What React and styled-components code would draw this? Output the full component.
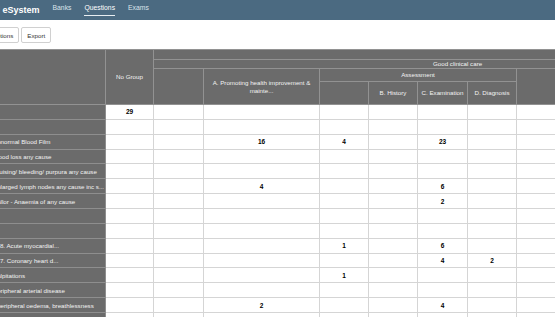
import React from 'react'
import styled, { createGlobalStyle } from 'styled-components'

const GlobalStyle = createGlobalStyle`
  html, body {
    margin: 0;
    padding: 0;
    overflow: hidden;
    background: #fff;
  }
  body {
    font-family: "Liberation Sans", Arial, sans-serif;
  }
`

/* page is scrolled sideways a little, like the screenshot */
const Page = styled.div`
  margin-left: -32px;
`

const NavBar = styled.nav`
  display: flex;
  align-items: center;
  gap: 13px;
  height: 20px;
  background: #4b6a81;
`
const Brand = styled.span`
  font-size: 9px;
  font-weight: bold;
  color: #fff;
  white-space: nowrap;
`
const NavLinks = styled.div`
  display: flex;
  align-items: center;
  gap: 13px;
`
const NavLink = styled.a`
  display: inline-block;
  font-size: 6.8px;
  line-height: 8px;
  padding-bottom: 2.5px;
  color: ${p => (p.$active ? '#ffffff' : '#dbe4eb')};
  border-bottom: 1px solid ${p => (p.$active ? '#e8eef2' : 'transparent')};
  text-decoration: none;
  cursor: pointer;
`

const Content = styled.div`
  padding: 0 18px;
`
const Toolbar = styled.div`
  display: flex;
  gap: 2px;
  padding: 7px 0 6px;
`
const ToolButton = styled.button`
  height: 16px;
  box-sizing: border-box;
  padding: 0 5px;
  border: 1px solid #d0d0d0;
  border-radius: 2px;
  background: #fff;
  color: #333;
  font-family: inherit;
  font-size: 6.2px;
`

const Table = styled.table`
  border-collapse: collapse;
  table-layout: fixed;
  width: 774px;
`
const Col = styled.col`
  width: ${p => p.$w}px;
`
const HeadRow = styled.tr`
  height: ${p => p.$h}px;
`
const Th = styled.th`
  background: #6b6b6b;
  color: #f3f3f3;
  font-weight: normal;
  font-size: 6.2px;
  line-height: 1.2;
  border: 1px solid #929292;
  padding: 0 3px;
  text-align: center;
  vertical-align: middle;
  white-space: ${p => (p.$wrap ? 'normal' : 'nowrap')};
`
const BodyRow = styled.tr`
  height: 14.86px;
`
const Label = styled.td`
  background: #6b6b6b;
  color: #f4f4f4;
  font-size: 6.2px;
  border: 1px solid #8e8e8e;
  padding: 0 0 0 6px;
  white-space: nowrap;
  overflow: hidden;
`
const Cell = styled.td`
  border: 1px solid #d5d5d5;
  padding: 0;
  text-align: center;
  font-size: 6.5px;
  font-weight: bold;
  color: #000;
`

const widths = [119, 48, 50, 116, 49, 49, 50, 49, 49, 49, 49, 49, 49]

const rows = [
  { label: '', values: { 1: 29 } },
  { label: '', values: {} },
  { label: 'Abnormal Blood Film', values: { 3: 16, 4: 4, 6: 23 } },
  { label: 'Blood loss any cause', values: {} },
  { label: 'Bruising/ bleeding/ purpura any cause', values: {} },
  { label: 'Enlarged lymph nodes any cause inc s...', values: { 3: 4, 6: 6 } },
  { label: 'Pallor - Anaemia of any cause', values: { 6: 2 } },
  { label: '', values: {} },
  { label: '', values: {} },
  { label: '128. Acute myocardial...', values: { 4: 1, 6: 6 } },
  { label: '127. Coronary heart d...', values: { 6: 4, 7: 2 } },
  { label: 'Palpitations', values: { 4: 1 } },
  { label: 'Peripheral arterial disease', values: {} },
  { label: 'Pperipheral oedema, breathlessness', values: { 3: 2, 6: 4 } },
  { label: '', values: {} },
]

function QuestionGrid() {
  return (
    <Table>
      <colgroup>
        {widths.map((w, i) => <Col key={i} $w={w} />)}
      </colgroup>
      <thead>
        <HeadRow $h={10}>
          <Th rowSpan={4}></Th>
          <Th rowSpan={4}>No Group</Th>
          <Th colSpan={11}></Th>
        </HeadRow>
        <HeadRow $h={9}>
          <Th colSpan={11}>Good clinical care</Th>
        </HeadRow>
        <HeadRow $h={13}>
          <Th rowSpan={2}></Th>
          <Th rowSpan={2} $wrap>A. Promoting health improvement &amp; mainte...</Th>
          <Th colSpan={4}>Assessment</Th>
          <Th rowSpan={2}></Th>
          <Th rowSpan={2}></Th>
          <Th rowSpan={2}></Th>
          <Th rowSpan={2}></Th>
          <Th rowSpan={2}></Th>
        </HeadRow>
        <HeadRow $h={23}>
          <Th></Th>
          <Th>B. History</Th>
          <Th>C. Examination</Th>
          <Th>D. Diagnosis</Th>
        </HeadRow>
      </thead>
      <tbody>
        {rows.map((r, i) => (
          <BodyRow key={i}>
            <Label>{r.label}</Label>
            {widths.slice(1).map((_, c) => (
              <Cell key={c}>{r.values[c + 1] ?? ''}</Cell>
            ))}
          </BodyRow>
        ))}
      </tbody>
    </Table>
  )
}

export default function App() {
  return (
    <Page>
      <GlobalStyle />
      <NavBar>
        <Brand>Clinical eSystem</Brand>
        <NavLinks>
          <NavLink>Banks</NavLink>
          <NavLink $active>Questions</NavLink>
          <NavLink>Exams</NavLink>
        </NavLinks>
      </NavBar>
      <Content>
        <Toolbar>
          <ToolButton>Options</ToolButton>
          <ToolButton>Export</ToolButton>
        </Toolbar>
        <QuestionGrid />
      </Content>
    </Page>
  )
}
